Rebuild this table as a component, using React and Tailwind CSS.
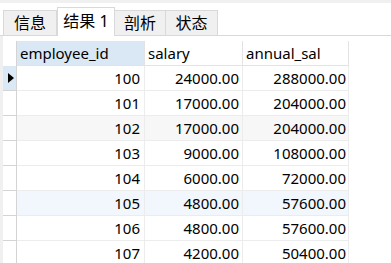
const TABS = [
  { label: "信息", w: "w-[54px]" },
  { label: "结果 1", w: "w-[58px]", active: true },
  { label: "剖析", w: "w-[52px]" },
  { label: "状态", w: "w-[53px]" },
];

const ROWS = [
  ["100", "24000.00", "288000.00"],
  ["101", "17000.00", "204000.00"],
  ["102", "17000.00", "204000.00"],
  ["103", "9000.00", "108000.00"],
  ["104", "6000.00", "72000.00"],
  ["105", "4800.00", "57600.00"],
  ["106", "4800.00", "57600.00"],
  ["107", "4200.00", "50400.00"],
];

function Tabs() {
  return (
    <div className="flex h-[33px] items-end border-b border-[#d9d9d9] bg-white pl-[3px]">
      {TABS.map((t) =>
        t.active ? (
          <div
            key={t.label}
            className={`${t.w} -mb-px flex h-[29px] items-center justify-center border border-b-0 border-[#d9d9d9] bg-white pb-[2px] text-[16px] text-black`}
          >
            {t.label}
          </div>
        ) : (
          <div
            key={t.label}
            className={`${t.w} -ml-px flex h-[25px] items-center justify-center border border-b-0 border-[#d9d9d9] bg-[#f0f0f0] text-[16px] text-black first:ml-0`}
          >
            {t.label}
          </div>
        )
      )}
    </div>
  );
}

function Row({ r, i }) {
  const bg = i === 2 ? "bg-[#f7f7f7]" : i === 5 ? "bg-[#f2f7fd]" : "bg-white";
  return (
    <div className="flex h-[25px]">
      <div
        className={`flex w-[14px] shrink-0 items-center border-r border-b border-[#d4d4d4] pl-[5px] ${
          i === 0 ? "bg-[#dbe8f6]" : "bg-white"
        }`}
      >
        {i === 0 && (
          <div className="h-0 w-0 border-y-[5px] border-l-[6px] border-y-transparent border-l-black" />
        )}
      </div>
      <div className={`flex ${bg}`}>
        <div className="flex w-[128px] items-center justify-end border-r border-b border-[#ececec] pr-[4px]">
          {r[0]}
        </div>
        <div className="flex w-[98px] items-center justify-end border-r border-b border-[#ececec] pr-[3px]">
          {r[1]}
        </div>
        <div className="flex w-[106px] items-center justify-end border-r border-b border-[#ececec] pr-[2px]">
          {r[2]}
        </div>
      </div>
    </div>
  );
}

export default function App() {
  return (
    <div
      className="h-[263px] w-[391px] overflow-hidden bg-[#f0f0f0] pt-[3px] text-[15px] text-black"
      style={{ fontFamily: '"Noto Sans", "Noto Sans CJK SC", sans-serif' }}
    >
      <Tabs />
      <div className="ml-[3px] h-full bg-white pt-[5px]">
        <div className="flex h-[25px]">
          <div className="w-[14px] shrink-0 border-r border-[#d4d4d4] bg-white" />
          <div className="flex w-[128px] items-center border-r border-b border-[#e3e3e3] bg-[#dae8f6] pl-[3px]">
            employee_id
          </div>
          <div className="flex w-[98px] items-center border-r border-b border-[#e3e3e3] pl-[3px]">
            salary
          </div>
          <div className="flex w-[106px] items-center border-r border-b border-[#e3e3e3] pl-[3px]">
            annual_sal
          </div>
        </div>
        {ROWS.map((r, i) => (
          <Row key={r[0]} r={r} i={i} />
        ))}
      </div>
    </div>
  );
}
